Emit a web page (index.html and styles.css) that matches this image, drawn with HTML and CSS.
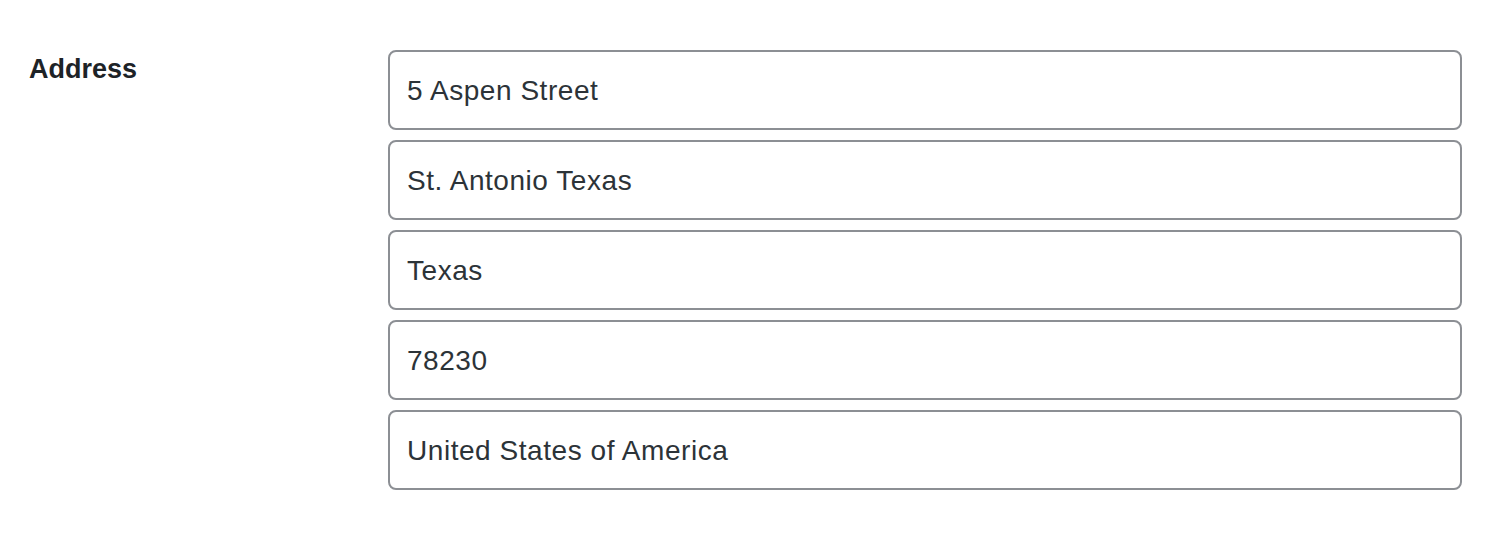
FILE: index.html
```html
<!DOCTYPE html>
<html>
<head>
<meta charset="utf-8">
<link rel="stylesheet" href="styles.css">
</head>
<body>
<div class="row">
  <div class="label">Address</div>
  <div class="fields">
    <input class="field" type="text" value="5 Aspen Street">
    <input class="field" type="text" value="St. Antonio Texas">
    <input class="field" type="text" value="Texas">
    <input class="field" type="text" value="78230">
    <input class="field" type="text" value="United States of America">
  </div>
</div>
</body>
</html>
```
FILE: styles.css
```css
html, body {
  margin: 0;
  padding: 0;
  background: #ffffff;
}
body {
  font-family: "Liberation Sans", Arial, sans-serif;
  color: #1d2327;
}
.row {
  display: flex;
  padding: 50px 38px 0 29px;
}
.label {
  width: 359px;
  flex: none;
  font-weight: 700;
  font-size: 27px;
  line-height: 36px;
  padding-top: 1px;
  color: #1d2327;
}
.fields {
  flex: 1;
  display: flex;
  flex-direction: column;
  gap: 10px;
}
.field {
  box-sizing: border-box;
  height: 80px;
  width: 100%;
  margin: 0;
  border: 2px solid #8c8f94;
  border-radius: 8px;
  padding: 2px 17px 0;
  font-family: "Liberation Sans", Arial, sans-serif;
  font-size: 28px;
  letter-spacing: 0.55px;
  color: #2c3338;
  background: #fff;
  outline: none;
}
```
